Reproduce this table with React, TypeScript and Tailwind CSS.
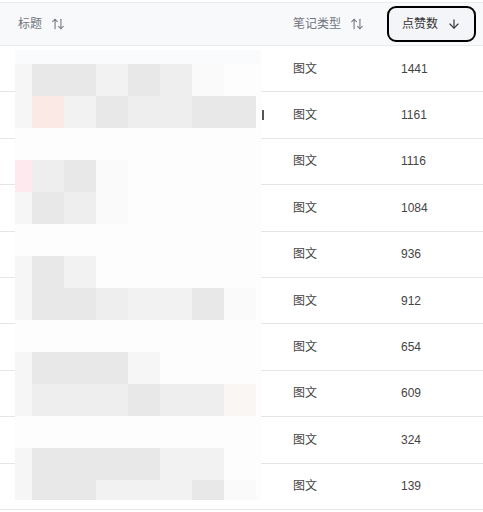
import { ArrowDown, ArrowUpDown } from "lucide-react";

const rows = [
  { type: "图文", likes: 1441 },
  { type: "图文", likes: 1161 },
  { type: "图文", likes: 1116 },
  { type: "图文", likes: 1084 },
  { type: "图文", likes: 936 },
  { type: "图文", likes: 912 },
  { type: "图文", likes: 654 },
  { type: "图文", likes: 609 },
  { type: "图文", likes: 324 },
  { type: "图文", likes: 139 },
];

// blurred-out titles: one letter per mosaic tile
const tone: Record<string, string> = {
  W: "bg-[#fdfdfd]",
  h: "bg-[#fafbfc]",
  a: "bg-[#f6f6f6]",
  b: "bg-[#e8e8e8]",
  c: "bg-[#eeeeee]",
  d: "bg-[#f2f2f2]",
  e: "bg-[#fafafa]",
  p: "bg-[#fbe9e6]",
  q: "bg-[#fde9ee]",
  t: "bg-[#faf6f3]",
};

const mosaic = [
  "hhhhhhhhh",
  "abbdbceWW",
  "apdbccbbW",
  "WWWWWWWWW",
  "qcbeWWWWW",
  "abceWWWWW",
  "WWWWWWWWW",
  "abdWWWWWW",
  "abbcddbeW",
  "WWWWWWWWW",
  "abbbaWWWW",
  "acccbcctW",
  "WWWWWWWWW",
  "abbbbddWW",
  "abbdddbeW",
];

function Mosaic() {
  return (
    <div className="pointer-events-none absolute left-[15px] top-[50px] grid h-[450px] w-[246px] grid-cols-[17px_repeat(7,32px)_5px] grid-rows-[14px_repeat(13,32px)_20px]">
      {mosaic.flatMap((line, r) =>
        line.split("").map((k, c) => <div key={`${r}-${c}`} className={tone[k]} />),
      )}
    </div>
  );
}

export default function App() {
  return (
    <div
      className="relative w-[483px] bg-white pt-[2px] text-[12px]"
      style={{ fontFamily: '"Liberation Sans", "Noto Sans CJK SC", sans-serif' }}
    >
      <div className="flex h-[44px] items-center border-y border-[#e8eaee] bg-[#f8f9fb] text-[#70757e]">
        <div className="flex w-[277px] items-center gap-[9px] pl-[18px]">
          <span>标题</span>
          <ArrowUpDown size={14} strokeWidth={2} className="text-[#7a8089]" />
        </div>
        <div className="flex w-[108px] items-center gap-[9px] pl-4">
          <span>笔记类型</span>
          <ArrowUpDown size={14} strokeWidth={2} className="text-[#7a8089]" />
        </div>
        <div className="flex flex-1 items-center">
          <button className="ml-[2px] flex h-[36px] items-center gap-[9px] rounded-[9px] border-2 border-black bg-[#f3f5f8] pl-[13px] pr-[13px] text-[#333]">
            <span>点赞数</span>
            <ArrowDown size={14} strokeWidth={2} />
          </button>
        </div>
      </div>

      {rows.map((row, i) => (
        <div key={i} className="flex h-[46.4px] items-center border-b border-[#e5e5e5] text-[#444]">
          <div className="w-[277px]" />
          <div className="w-[108px] pl-4">{row.type}</div>
          <div className="flex-1 pl-4">{row.likes}</div>
        </div>
      ))}

      <Mosaic />
      <div className="absolute left-[262px] top-[110px] h-[10px] w-[1.5px] bg-[#555]" />
    </div>
  );
}
